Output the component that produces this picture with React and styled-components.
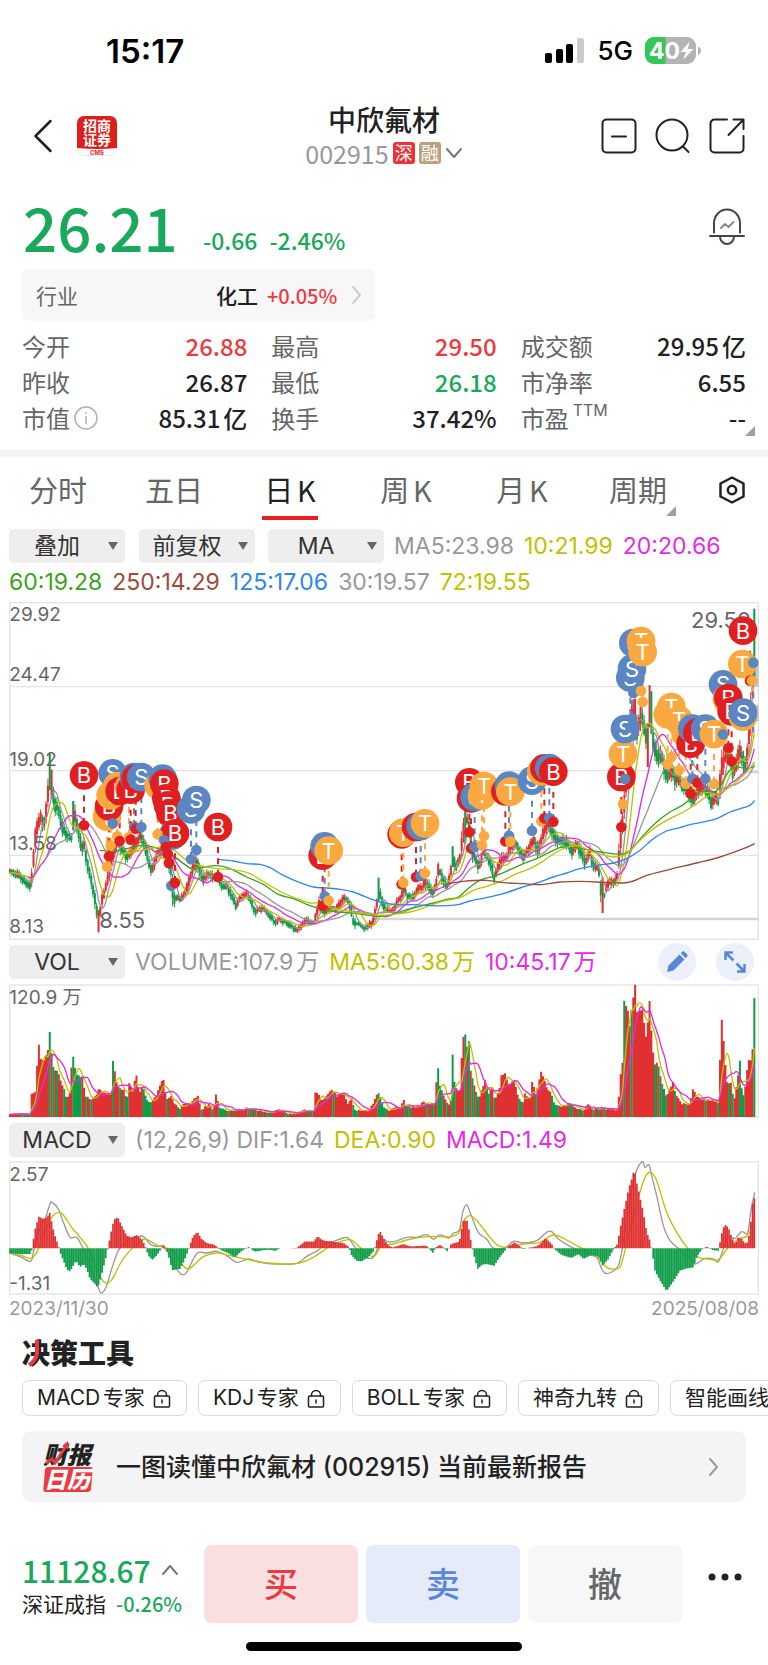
import React from 'react';
import styled, { createGlobalStyle } from 'styled-components';

const C = {
  ink: '#222222',
  label: '#666666',
  mute: '#98989d',
  red: '#ec3a40',
  green: '#1aa85c',
  up: '#e03030',
  down: '#0f9d47',
  olive: '#c0c000',
  magenta: '#e02be8',
  lime: '#3aa21d',
  brown: '#9c4a3c',
  blue: '#2d87ef',
  line: '#e4e4e4',
};

const UI = `"Noto Sans CJK SC", "Noto Sans", sans-serif`;
const NUM = `Inter, "Noto Sans CJK SC", sans-serif`;

const GlobalStyle = createGlobalStyle`
  *, *::before, *::after { box-sizing: border-box; }
  body { margin: 0; background: #fff; color: ${C.ink}; font-family: ${UI}; text-autospace: normal; }
  button, select { font: inherit; color: inherit; border: 0; margin: 0; padding: 0; background: none; cursor: pointer; }
  a { color: inherit; text-decoration: none; }
  h1, h2, p, dl, dd, dt { margin: 0; font-weight: inherit; }
  svg { display: block; flex: none; }
`;

/* ---------- chart data ---------- */

const HALF = 1140;
const FIRST = 30;
const STEP = 5.42;
const COUNT = 413;

const parse = (s, dx = 0) =>
  s.trim().split(/\s+/).map((p) => {
    const [x, y] = p.split(',').map(Number);
    return [x + dx, y];
  });
const series = (early, late) => [...(early ? parse(early) : []), ...(late ? parse(late, HALF) : [])];

const at = (pts, x) => {
  if (x <= pts[0][0]) return pts[0][1];
  for (let i = 1; i < pts.length; i += 1) {
    if (x <= pts[i][0]) {
      const [x0, y0] = pts[i - 1];
      const [x1, y1] = pts[i];
      return x1 === x0 ? y1 : y0 + ((y1 - y0) * (x - x0)) / (x1 - x0);
    }
  }
  return pts[pts.length - 1][1];
};
const noise = (i, k) => {
  const v = Math.sin(i * 12.9898 + k * 78.233) * 43758.5453;
  return v - Math.floor(v);
};
const xs = Array.from({ length: COUNT }, (_, i) => FIRST + i * STEP);
const indexAt = (x) => Math.min(COUNT - 1, Math.round((x - FIRST) / STEP));

const smooth = (pts) => {
  let d = `M${pts[0][0]} ${pts[0][1]}`;
  for (let i = 0; i < pts.length - 1; i += 1) {
    const p0 = pts[Math.max(0, i - 1)];
    const p1 = pts[i];
    const p2 = pts[i + 1];
    const p3 = pts[Math.min(pts.length - 1, i + 2)];
    const c = [
      p1[0] + (p2[0] - p0[0]) / 6, p1[1] + (p2[1] - p0[1]) / 6,
      p2[0] - (p3[0] - p1[0]) / 6, p2[1] - (p3[1] - p1[1]) / 6,
      p2[0], p2[1],
    ].map((n) => n.toFixed(1));
    d += `C${c.join(' ')}`;
  }
  return d;
};
const average = (values, n, start) => {
  const out = [];
  for (let i = start; i < values.length; i += 1) {
    const part = values.slice(Math.max(0, i - n + 1), i + 1);
    out.push([xs[i], part.reduce((a, b) => a + b, 0) / part.length]);
  }
  return out;
};

const price = series(
  `28,845 60,858 92,888 96,850 103,780 108,720 115,700 122,680 130,710 138,660 146,590 151,560 157,590 163,640 172,650
   180,680 188,710 200,735 210,740 217,740 222,660 228,690 236,725 245,780 252,760 258,800 265,840 275,870 285,930
   293,980 298,990 303,940 312,910 320,880 328,850 338,800 346,770 352,750 365,780 380,800 395,780 405,760 420,740
   433,760 445,810 455,840 465,810 475,790 490,780 505,810 514,850 520,930 530,920 540,930 555,910 570,860 580,830
   590,810 600,850 612,870 625,850 640,860 654,865 665,890 680,890 695,915 707,945 720,925 740,910 755,940 765,965
   780,955 795,960 810,980 825,995 840,985 855,995 870,1005 887,1020 900,1010 915,990 940,1000 950,970 955,940
   975,970 990,950 1005,960 1020,940 1035,920 1045,930 1055,970 1062,1000 1075,1000 1090,1015 1105,1010 1120,990
   1130,940 1136,900`,
  `0,910 10,950 25,960 40,955 60,925 70,895 85,920 100,920 115,895 125,895 138,870 150,900 160,910 170,870 176,830
   185,860 200,890 212,850 217,790 228,830 240,800 250,720 258,680 266,700 275,780 285,800 297,830 310,780 318,790
   330,820 343,860 350,840 362,810 380,800 390,770 405,760 418,780 428,800 445,780 462,750 472,780 483,750 492,720
   505,700 515,720 523,740 535,750 550,750 565,765 578,785 590,765 605,790 615,820 630,790 640,830 655,830 662,890
   670,930 678,895 690,870 702,880 712,860 718,790 724,730 730,680 737,590 745,480 755,380 763,360 772,430 780,370
   788,390 795,420 802,470 808,360 813,400 822,470 835,510 845,490 855,550 865,560 875,540 885,570 895,560 908,590
   920,590 930,620 940,630 955,600 970,590 985,610 995,640 1005,620 1015,630 1025,530 1035,500 1045,480 1060,550
   1070,520 1078,480 1085,500 1098,530 1105,450 1112,370 1118,260 1124,210`,
);

const closes = xs.map((x) => at(price, x));
const candles = xs.map((x, i) => {
  const prev = closes[Math.max(0, i - 1)];
  const slope = closes[i] - prev;
  const rising = slope + (noise(i, 1) - 0.55) * 8 < 0;
  const swing = 5 + Math.abs(slope) * 0.5 + noise(i, 2) * 7 + (1000 - closes[i]) * 0.03;
  const mid = closes[i] + (noise(i, 5) - 0.5) * 8;
  return {
    x,
    rising,
    top: mid - swing * 0.55,
    bottom: mid + swing * 0.55,
    high: mid - swing * (0.7 + noise(i, 3) * 0.5),
    low: mid + swing * (0.7 + noise(i, 4) * 0.5),
  };
});
/* sessions whose range is far wider than their neighbours' */
[[151, 490, 600, 0], [157, 538, 625, 1], [222, 632, 720, 0], [298, 960, 1026, 1], [1138, 862, 935, 0], [1357, 768, 830, 0],
  [1396, 650, 760, 0], [1810, 860, 968, 1], [1941, 400, 530, 1], [1947, 285, 410, 1], [1952, 303, 430, 0], [1904, 325, 450, 1],
  [2264, 55, 275, 0]].forEach(([x, top, bottom, up]) => {
  const i = indexAt(x);
  candles[i] = { x: xs[i], rising: !!up, top, bottom, high: top, low: bottom };
});

const strokePath = (list, from, to) =>
  list.map((c) => `M${c.x.toFixed(1)} ${from(c).toFixed(1)}V${to(c).toFixed(1)}`).join('');

const ma60 = series(
  `299,780 340,783 380,775 430,765 470,773 500,785 540,812 575,835 600,832 650,826 690,835 740,860 790,882 835,912
   880,925 920,942 960,955 1010,965 1060,968 1110,975 1150,978`,
  `40,970 80,958 120,948 160,938 200,927 235,920 270,890 300,870 350,855 390,838 430,820 470,805 500,790 540,772
   580,770 620,778 660,785 720,792 750,780 790,735 830,695 870,665 910,643 950,610 980,600 1000,606 1020,590
   1045,545 1070,530 1100,535 1124,528`,
);
const ma72 = series(
  `365,790 400,785 450,775 500,770 530,785 560,810 600,825 650,835 700,838 750,850 800,880 850,908 890,925 930,938
   960,938 1000,955 1060,965 1110,972`,
  `0,975 60,970 110,960 150,945 190,932 240,922 280,900 320,888 370,870 410,850 450,835 490,812 530,785 570,768
   600,768 640,785 700,800 740,790 780,750 820,715 860,690 910,665 950,640 980,618 1010,612 1050,590 1090,555 1124,515`,
);
const ma125 = series(
  `654,807 700,812 740,820 780,822 810,832 850,855 900,877 940,890 980,893 1020,897 1060,905 1110,925`,
  `0,935 50,943 100,943 150,946 200,946 235,943 270,932 320,922 370,910 420,893 470,878 520,860 560,848 600,835
   650,825 700,818 740,805 780,780 820,745 860,722 900,712 930,703 960,697 1010,685 1050,665 1090,652 1110,645 1124,630`,
);
const ma250 = series(
  '',
  `205,880 250,873 320,870 370,877 430,880 480,883 540,875 600,873 650,875 730,878 760,872 800,855 870,837 950,818
   1020,800 1090,775 1124,760`,
);

const volume = series(
  `27,534 92,533 96,470 106,465 112,385 117,325 123,370 133,368 145,338 150,288 156,370 163,405 173,400 182,430 190,458
   200,485 210,470 215,395 221,362 227,405 235,418 245,420 250,455 258,480 278,488 288,475 297,458 315,468 333,475
   341,375 347,428 355,450 370,460 380,490 390,440 398,465 407,418 418,470 428,448 440,490 455,498 470,475 488,428
   500,485 510,480 525,500 540,515 555,500 575,498 593,475 605,520 625,502 640,520 648,475 658,515 680,520 700,522
   740,515 780,524 810,528 833,518 860,530 890,530 910,520 940,528 947,465 953,468 965,495 985,470 997,458 1010,478
   1030,470 1045,505 1052,482 1065,520 1085,522 1105,525 1115,510 1128,480 1138,468`,
  `5,500 15,518 30,522 50,508 60,518 70,492 80,512 100,510 120,508 130,492 145,503 165,500 172,395 179,445 188,470
   205,505 213,490 217,352 222,435 230,460 240,460 248,305 255,292 261,330 266,315 272,405 282,445 297,490 310,445
   316,428 325,475 335,455 345,490 360,455 365,418 375,410 385,445 403,432 415,480 428,500 435,470 450,490 458,437
   468,475 478,430 484,405 492,432 500,450 515,475 525,505 545,510 570,498 590,515 610,520 625,502 640,520 660,515
   690,518 712,520 718,480 724,412 730,378 735,195 741,222 750,275 757,222 763,145 769,230 778,225 785,218 790,260
   800,310 807,195 813,285 820,350 825,385 833,375 842,420 850,455 860,480 870,460 878,437 888,475 905,500 930,503
   940,455 950,480 965,490 985,490 1000,490 1015,500 1018,435 1024,250 1032,322 1040,435 1050,440 1062,490 1072,435
   1079,370 1085,455 1092,480 1105,370 1112,370 1118,338 1124,188`,
);
/* the highest turnover inside each session's slot */
const slotTop = (x) => Math.min(...volume.filter(([vx]) => Math.abs(vx - x) <= STEP / 2).map((v) => v[1]), at(volume, x));
const volumes = xs.map((x, i) => Math.min(536, slotTop(x) + noise(i, 6) * 6));
const greenVolume = [150, 221, 227, 235, 341, 1138, 1312, 1319, 1357, 1362, 1395, 1406, 1875, 1897, 2219, 2264].map(indexAt);
const redVolume = [117, 123, 145, 215, 347, 488, 593, 648, 947, 1388, 1870, 1881, 1890, 1903, 1909, 1918, 1925, 1930, 1940, 1947, 2164, 2172, 2245, 2258]
  .map(indexAt);
const volumeBars = xs.map((x, i) => {
  const growing = i > 0 && volumes[i] < volumes[i - 1];
  const rising = redVolume.includes(i) || (!greenVolume.includes(i) && (growing || candles[i].rising || noise(i, 8) > 0.7));
  return { x, y: volumes[i], rising };
});

const histogram = series(
  `27,952 60,955 93,955 97,935 103,890 108,870 117,842 130,850 140,845 150,830 157,870 165,900 175,930 182,955 190,975
   200,1000 210,1008 220,990 228,975 240,995 250,985 260,1000 270,1030 285,1045 293,1057 300,1035 308,1005 318,965
   325,930 333,890 340,860 347,845 355,848 365,870 380,900 395,905 410,898 425,910 435,930 445,960 457,973 470,960
   480,945 490,928 500,942 508,970 516,1003 540,1000 553,975 565,945 575,910 585,895 593,890 605,910 620,922 645,928
   660,942 680,950 705,965 720,950 735,940 745,934 765,948 800,942 827,945 840,938 890,937 905,925 915,917 940,918
   953,902 970,915 1000,918 1030,922 1045,932 1055,960 1070,975 1085,977 1105,965 1122,945 1130,915 1138,887`,
  `0,887 12,910 25,930 40,935 70,925 90,932 140,930 150,942 158,952 168,935 180,928 190,935 203,948 213,925 238,918
   245,880 250,855 262,855 270,900 275,930 282,960 293,1000 305,988 318,985 343,990 355,970 375,945 385,932 403,920
   418,930 430,941 445,936 465,934 480,925 497,907 515,925 525,942 545,958 575,967 595,955 610,970 635,958 655,962
   668,990 685,970 700,942 712,925 722,870 735,810 747,755 755,730 763,700 770,740 780,785 790,830 800,890 810,915
   815,940 825,1005 840,1035 860,1066 875,1045 900,1005 920,998 940,995 950,965 965,942 980,933 1000,944 1015,945
   1020,920 1028,880 1035,867 1045,875 1055,905 1065,925 1075,905 1085,910 1098,925 1105,915 1112,860 1118,800 1124,785`,
);
const histBars = xs.map((x) => ({ x, y: at(histogram, x) }));
const dif = series(
  `28,952 60,963 92,977 100,950 115,890 135,850 150,805 156,800 175,820 190,860 210,905 230,905 250,940 270,990
   293,1050 303,1072 318,1055 335,1000 355,945 380,915 410,905 430,902 450,925 470,932 490,932 510,960 530,1000
   547,1017 560,1010 580,970 595,950 620,952 650,947 680,960 710,980 745,970 780,980 827,985 890,983 920,962 953,945
   975,925 1000,917 1030,907 1045,908 1070,940 1100,966 1120,965 1136,930`,
  `5,910 25,918 45,917 80,905 110,905 140,897 160,910 180,897 205,907 220,893 238,883 248,830 260,807 272,835 295,890
   320,910 340,937 375,937 400,917 430,922 470,915 500,890 515,888 535,910 570,932 620,955 650,965 665,1000 680,1014
   710,998 722,965 735,890 750,790 768,710 787,678 795,695 807,688 815,720 830,780 850,870 870,915 900,942 930,965
   945,985 975,968 1000,970 1015,978 1030,940 1045,905 1065,908 1085,888 1103,892 1112,830 1124,770`,
);
const dea = series(
  `28,948 60,958 92,968 110,950 130,900 155,845 175,830 190,838 215,875 240,905 265,938 285,990 303,1028 322,1043
   340,1025 360,985 385,950 415,922 435,910 465,925 490,935 520,945 545,985 565,1000 585,985 610,963 650,952 690,960
   745,972 790,980 850,985 895,983 940,965 980,938 1010,922 1050,912 1080,935 1105,958 1125,960`,
  `5,930 40,925 80,913 140,903 180,903 210,903 235,893 255,850 272,840 295,860 330,905 355,930 385,935 430,925 480,920
   520,898 560,913 600,935 650,962 680,995 705,1000 722,990 740,925 755,860 780,770 795,725 812,710 830,735 860,830
   890,890 925,940 955,965 985,970 1015,972 1045,935 1075,910 1105,898 1124,845`,
);

/* trade marks: kind, badge x, badge y, dot x, dot y */
const near = (list, dx = 0) => list.map(([k, x, y, x2 = x, y2 = y + 150]) => [k, x + dx, y, x2 + dx, y2]);
const marks = [
  ...near([
    ['B', 252, 555], ['S', 338, 549], ['T', 321, 679], ['B', 327, 648], ['T', 332, 615], ['T', 352, 588], ['B', 359, 602],
    ['T', 387, 590], ['B', 392, 598], ['S', 402, 560], ['B', 407, 565], ['S', 424, 560], ['T', 476, 585, 473, 732],
    ['S', 488, 565, 492, 750], ['B', 493, 580, 497, 770], ['B', 499, 624, 503, 790], ['B', 504, 645, 507, 818],
    ['B', 511, 668, 507, 818], ['S', 518, 735, 514, 886], ['B', 525, 729, 525, 877], ['S', 573, 657], ['S', 589, 629],
    ['B', 654, 710], ['B', 968, 796], ['S', 974, 768], ['T', 986, 781],
  ]),
  ...near([
    ['B', 65, 732], ['T', 70, 727], ['B', 108, 710], ['S', 122, 707], ['T', 135, 699], ['B', 268, 576], ['B', 273, 624],
    ['S', 284, 620], ['T', 306, 615], ['T', 312, 587], ['B', 376, 603], ['S', 387, 586], ['T', 391, 604], ['S', 456, 571],
    ['T', 484, 543], ['B', 493, 534], ['S', 508, 533], ['B', 520, 544], ['B', 724, 560], ['T', 729, 491], ['S', 735, 416],
    ['S', 760, 158], ['S', 751, 262], ['S', 756, 235], ['T', 783, 152], ['T', 788, 185], ['T', 863, 372], ['T', 874, 350],
    ['T', 897, 390], ['T', 917, 430], ['B', 932, 460], ['S', 937, 415], ['B', 952, 427], ['S', 976, 415], ['T', 1002, 431],
    ['S', 1029, 282], ['T', 1041, 326, 1045, 475], ['B', 1045, 323], ['B', 1055, 363], ['T', 1087, 221, 1112, 271],
    ['B', 1089, 121, 1110, 271], ['T', 1089, 379, 1116, 271], ['S', 1089, 367, 1120, 217],
  ], HALF),
];
const MARK = { B: '#e02020', S: '#5b86c2', T: '#f9a940' };

/* ---------- layout ---------- */

const Page = styled.main`
  width: 100%;
  overflow: hidden;
  background: #fff;
`;
const StatusBar = styled.div`
  display: flex;
  align-items: center;
  justify-content: space-between;
  height: 102px;
  padding: 0 66px 0 106px;
  color: #000;
  font-family: ${NUM};
`;
const Clock = styled.time`
  font-size: 33px;
  line-height: 36px;
  font-weight: 600;
`;
const StatusIcons = styled.div`
  display: flex;
  align-items: center;
  gap: 12px;
  font-size: 26px;
  line-height: 32px;
  font-weight: 500;
`;
const Header = styled.header`
  display: grid;
  grid-template-columns: 1fr auto 1fr;
  align-items: center;
  height: 64px;
  padding: 0 23px;
`;
const Side = styled.div`
  display: flex;
  align-items: center;
  gap: ${(p) => p.$gap}px;
  padding-left: 7px;
  justify-content: ${(p) => (p.$end ? 'flex-end' : 'flex-start')};
`;
const IconButton = styled.button`
  display: flex;
  align-items: center;
  justify-content: center;
`;
const TitleBlock = styled.div`
  display: flex;
  flex-direction: column;
  align-items: center;
`;
const Title = styled.h1`
  font-size: 28px;
  line-height: 34px;
  font-weight: 500;
`;
const CodeRow = styled.button`
  display: flex;
  align-items: center;
  gap: 4px;
  font-size: 25px;
  line-height: 34px;
  color: ${C.mute};
`;
const Tag = styled.span`
  width: 22px;
  height: 22px;
  border-radius: 3px;
  background: ${(p) => p.$bg};
  color: #fff;
  font-size: 18px;
  line-height: 21px;
  text-align: center;
`;
const PriceRow = styled.section`
  display: flex;
  align-items: flex-end;
  height: 84px;
  padding: 0 23px;
  margin-top: 8px;
  color: ${C.green};
  font-weight: 500;
`;
const Price = styled.p`
  width: 180px;
  font-size: 60px;
  line-height: 64px;
`;
const Change = styled.p`
  display: flex;
  flex: 1;
  gap: 12px;
  font-size: 23px;
  line-height: 36px;
`;
const BellButton = styled(IconButton)`
  align-self: center;
  padding-top: 22px;
`;
const Industry = styled.a`
  display: flex;
  align-items: center;
  width: 46%;
  height: 52px;
  margin: 11px 22px 0;
  padding: 0 12px 0 14px;
  border-radius: 7px;
  background: #f7f7f7;
  font-size: 21px;
  color: ${C.label};
`;
const IndustryName = styled.span`
  margin: 0 9px 0 auto;
  color: ${C.ink};
  font-weight: 500;
`;
const IndustryMove = styled.span`
  margin-right: 14px;
  color: ${C.red};
  font-size: 20px;
  font-weight: 500;
`;
const Stats = styled.dl`
  position: relative;
  display: grid;
  grid-template-columns: repeat(3, 1fr);
  column-gap: 24px;
  padding: 7px 22px 14px;
`;
const Stat = styled.div`
  display: flex;
  align-items: center;
  justify-content: space-between;
  height: 36px;
  font-size: 24px;
  line-height: 36px;
`;
const StatLabel = styled.dt`
  display: flex;
  align-items: center;
  gap: 4px;
  color: ${C.label};
`;
const StatValue = styled.dd`
  color: ${(p) => p.$color || C.ink};
  font-size: 24px;
  font-weight: 500;
`;
const Sup = styled.sup`
  align-self: flex-start;
  font: 16px/20px ${NUM};
`;
const Corner = styled.i`
  position: absolute;
  right: ${(p) => p.$right}px;
  bottom: ${(p) => p.$bottom}px;
  width: 0;
  height: 0;
  border-left: 10px solid transparent;
  border-bottom: 10px solid #a0a0a0;
`;
const Band = styled.div`
  height: 7px;
  background: #f4f4f4;
`;
const Tabs = styled.nav`
  display: flex;
  height: 67px;
`;
const Tab = styled.button`
  position: relative;
  flex: 1;
  display: flex;
  justify-content: center;
  color: ${(p) => (p.$active ? C.ink : C.label)};
  font-size: 29px;
  line-height: 64px;

  span {
    height: 63px;
    padding: 0 2px;
    border-bottom: 4px solid ${(p) => (p.$active ? '#ea2020' : 'transparent')};
  }
`;
const GearButton = styled(IconButton)`
  width: 72px;
  padding-bottom: 2px;
`;
const Charts = styled.section`
  padding: 0 9px;
  font-family: ${NUM};
`;
const Legend = styled.div`
  display: flex;
  flex-wrap: wrap;
  align-items: center;
  align-content: ${(p) => (p.$pad ? 'flex-start' : 'center')};
  column-gap: 10px;
  min-height: ${(p) => p.$h}px;
  padding-top: ${(p) => p.$pad || 0}px;
  font-size: 23px;
  line-height: 36px;
  white-space: nowrap;
`;
const Reading = styled.span`
  color: ${(p) => p.$color};
`;
const Picker = styled.label`
  position: relative;
  display: flex;
  width: 116px;
  margin-right: ${(p) => p.$after || 0}px;

  svg {
    position: absolute;
    right: 7px;
    top: 13px;
    pointer-events: none;
  }
`;
const Select = styled.select`
  appearance: none;
  width: 100%;
  height: 34px;
  padding-right: 20px;
  border-radius: 5px;
  background: #eeeeee;
  color: #333333;
  font-size: 23px;
  line-height: 34px;
  text-align-last: center;
`;
const Plot = styled.svg`
  width: 100%;
  height: auto;
  overflow: hidden;

  text { font-family: ${NUM}; font-size: 57px; fill: #666666; }
  path { fill: none; }
`;
const ChartTools = styled.div`
  display: flex;
  gap: 20px;
  margin-left: auto;
  padding-right: 5px;
`;
const RoundButton = styled(IconButton)`
  width: 38px;
  height: 38px;
  border-radius: 50%;
  background: #ebf0fb;
`;
const Dates = styled.div`
  display: flex;
  justify-content: space-between;
  font-size: 19px;
  line-height: 28px;
  color: #999999;
`;
const Tools = styled.section`
  padding: 12px 0 0 22px;
`;
const ToolsTitle = styled.h2`
  position: relative;
  font-size: 28px;
  line-height: 34px;
  font-weight: 900;

  svg { position: absolute; left: 0; top: 3px; }
`;
const Chips = styled.div`
  display: flex;
  gap: 11px;
  padding-top: 11px;
  overflow: hidden;
`;
const Chip = styled.button`
  display: flex;
  flex: none;
  align-items: center;
  gap: 8px;
  height: 36px;
  padding: 0 15px 0 14px;
  border: 1px solid #dadada;
  border-radius: 7px;
  font: 21px/34px ${NUM};
  white-space: nowrap;
`;
const Banner = styled.a`
  display: flex;
  align-items: center;
  gap: 22px;
  height: 71px;
  margin: 15px 22px 0;
  padding: 0 26px 0 20px;
  border-radius: 9px;
  background: #f4f4f4;
  font: 500 25px/36px ${NUM};

  & > :last-child { margin-left: auto; }
`;
const TradeBar = styled.footer`
  display: flex;
  align-items: center;
  gap: 8px;
  margin-top: 43px;
  padding: 0 22px;
`;
const IndexQuote = styled.button`
  flex: none;
  width: 174px;
  text-align: left;
  font-size: 21px;
  line-height: 28px;
`;
const IndexValue = styled.span`
  display: flex;
  align-items: center;
  gap: 10px;
  height: 38px;
  color: ${C.green};
  font-size: 30px;
  font-weight: 500;
`;
const IndexMove = styled.span`
  margin-left: 10px;
  color: ${C.green};
  font-size: 20px;
  font-weight: 500;
`;
const TradeButton = styled.button`
  flex: 1;
  height: 78px;
  padding-bottom: 3px;
  border-radius: 7px;
  background: ${(p) => p.$bg};
  color: ${(p) => p.$color};
  font-size: 34px;
  font-weight: 500;
`;
const MoreButton = styled(IconButton)`
  width: 56px;
  height: 78px;
  justify-content: flex-end;
  padding: 0 4px 14px 0;
`;
const HomeIndicator = styled.div`
  width: 36%;
  height: 9px;
  margin: 19px auto 14px;
  border-radius: 5px;
  background: #000;
`;

/* ---------- drawings ---------- */

const Signal = () => (
  <svg width="40" height="26" viewBox="0 0 40 26">
    <rect x="0" y="15" width="7" height="10" rx="2" />
    <rect x="11" y="11" width="7" height="14" rx="2" />
    <rect x="21" y="6" width="7" height="19" rx="2" />
    <rect x="32" y="0" width="7" height="25" rx="2" fill="#cccccc" />
  </svg>
);
const Battery = () => (
  <svg width="57" height="28" viewBox="0 0 57 28">
    <path d="M9 0H42a9 9 0 0 1 9 9V18a9 9 0 0 1-9 9H9a9 9 0 0 1-9-9V9a9 9 0 0 1 9-9Z" fill="#b3b3b3" />
    <path d="M9 0H20.500V27H9a9 9 0 0 1-9-9V9a9 9 0 0 1 9-9Z" fill="#34c759" />
    <path d="M53 9.500c4 1.500 4 7 0 8.500Z" fill="#b3b3b3" />
    <text x="4" y="22" fontSize="23" fontWeight="700" fill="#fff" fontFamily="Inter">40</text>
    <path d="M45 4.500L35.500 15h5.500L38 23l10.500-11h-6Z" fill="#fff" />
  </svg>
);
const Back = () => (
  <svg width="24" height="34" viewBox="0 0 24 34" fill="none" stroke="#222" strokeWidth="2.500">
    <path d="M20.500 2L5.500 17l15 15" strokeLinecap="round" strokeLinejoin="round" />
  </svg>
);
const BrokerLogo = () => (
  <svg width="40" height="40" viewBox="0 0 40 40" role="img" aria-label="招商证券">
    <rect x="0.500" y="0.500" width="39" height="39" rx="7" fill="#fff" stroke="#e8e8e8" />
    <path d="M7 0H33a7 7 0 0 1 7 7V32Q20 34 0 32V7a7 7 0 0 1 7-7Z" fill="#dc1f1c" />
    <g fill="#fff" fontFamily="Noto Sans CJK SC" fontWeight="700" fontSize="14" textAnchor="middle">
      <text x="20" y="15">招商</text>
      <text x="20" y="29">证券</text>
    </g>
    <text x="20" y="39" fontSize="6" fontWeight="700" fill="#dc1f1c" textAnchor="middle" fontFamily="Inter">CMS</text>
  </svg>
);
const Line = ({ w, h, width = 2, color = '#222', children }) => (
  <svg width={w} height={h} viewBox={`0 0 ${w} ${h}`} fill="none" stroke={color} strokeWidth={width} strokeLinecap="round" strokeLinejoin="round">
    {children}
  </svg>
);
const Remove = () => (
  <Line w={36} h={36}><rect x="1.500" y="1.500" width="33" height="33" rx="4" /><path d="M11 18.500H25" /></Line>
);
const Search = () => (
  <Line w={36} h={36}><circle cx="17" cy="17" r="15.500" /><path d="M28 28.500L33.500 34" /></Line>
);
const Share = () => (
  <Line w={36} h={36}>
    <path d="M18 1.500H5.500a4 4 0 0 0-4 4V30.500a4 4 0 0 0 4 4H30.500a4 4 0 0 0 4-4V18" />
    <path d="M24.500 1.500H34.500V11M34 2L19.500 17" />
  </Line>
);
const Bell = () => (
  <Line w={36} h={38} color="#444">
    <path d="M5 24.500V15a13 13.500 0 0 1 26 0v9.500M1 28H35M11 28.500a7 7.500 0 0 0 14 0" />
    <path d="M12 20l4-4 3.500 3 5-5" stroke="#888" />
  </Line>
);
const Down = () => <Line w={18} h={12} color="#777"><path d="M2 2l7 8 7-8" /></Line>;
const Up = () => <Line w={18} h={12} color="#777"><path d="M2 10l7-8 7 8" /></Line>;
const Next = ({ color }) => <Line w={12} h={20} color={color}><path d="M2 2l7 8-7 8" /></Line>;
const Info = () => (
  <Line w={24} h={24} width={1.500} color="#b0b0b0"><circle cx="12" cy="12" r="11" /><path d="M12 10.500v7M12 6.500v.5" /></Line>
);
const Gear = () => (
  <Line w={28} h={28} width={2.500}><path d="M14 1.500L25.500 7.500V20.500L14 26.500 2.500 20.500V7.500Z" /><circle cx="14" cy="14" r="4.200" /></Line>
);
const Lock = () => (
  <Line w={18} h={19} width={1.500}><rect x="1.500" y="7" width="15" height="11" rx="1" /><path d="M4.500 7V6a4.500 4.500 0 0 1 9 0v1M9 11v3" /></Line>
);
const Caret = () => <svg width="10" height="8" viewBox="0 0 10 8"><path d="M0 0H10L5 8Z" fill="#666" /></svg>;
const Pencil = () => (
  <svg width="22" height="22" viewBox="0 0 22 22" fill="#5b86d8">
    <path d="M1 21L2.500 14.500 13.500 3.500 18.500 8.500 7.500 19.500Z" /><path d="M14.800 2.300L16.500 .6q1.200-.8 2.300.3L21 3.200q1 1.100.2 2.200L19.700 7.200Z" />
  </svg>
);
const Expand = () => (
  <svg width="22" height="22" viewBox="0 0 22 22" fill="none" stroke="#5b86d8" strokeWidth="2.500">
    <path d="M9.500 9.500L2 2M1.500 9V1.500H9M12.500 12.500L20 20M20.500 13V20.500H13" />
  </svg>
);
const ReportLogo = () => (
  <svg width="52" height="52" viewBox="0 0 52 52" overflow="visible" role="img" aria-label="财报日历">
    <g fontFamily="Noto Sans CJK SC" fontWeight="900" fontStyle="italic">
      <text x="1" y="23" fontSize="24" fill="#222">财报</text>
      <path d="M6 26H48q3 0 2.600 3L49 48q-.4 3-3.500 3H4q-3 0-2.600-3L3 29q.3-3 3-3Z" fill="#ec3a40" />
      <text x="2" y="47" fontSize="23" fill="#fff">日历</text>
    </g>
    <path d="M4 22l6-4 3 4L24 5" fill="none" stroke="#ec3a40" strokeWidth="3" /><path d="M20 5L26 0l.5 8Z" fill="#ec3a40" />
  </svg>
);

/* ---------- charts ---------- */

const Curve = ({ pts, color }) => <path d={smooth(pts)} stroke={color} strokeWidth="4" />;

const PriceChart = () => (
  <Plot viewBox="27 35 2250 1014" role="img" aria-label="日K线图">
    <g stroke={C.line} strokeWidth="4" fill="none">
      <rect x="29" y="37" width="2246" height="1010" />
      <path d="M27 289H2277M27 541H2277M27 795H2277" />
    </g>
    <path d="M1120 986H2277M2240 545H2277" stroke="#d4d4d4" strokeWidth="7" />
    <path d="M2270 225V290M2270 343V392" stroke="#c8c8c8" strokeWidth="13" />
    {[true, false].map((up) => {
      const list = candles.filter((c) => c.rising === up);
      return (
        <g key={String(up)} stroke={up ? C.up : C.down}>
          <path d={strokePath(list, (c) => c.high, (c) => c.low)} strokeWidth="3" />
          <path d={strokePath(list, (c) => c.top, (c) => c.bottom)} strokeWidth="6" />
        </g>
      );
    })}
    <Curve pts={average(closes, 5, 0)} color={C.mute} />
    <Curve pts={average(closes, 10, 0)} color={C.olive} />
    <Curve pts={average(closes, 20, 10)} color={C.magenta} />
    <Curve pts={average(closes, 30, 20)} color={C.mute} />
    <Curve pts={ma60} color={C.lime} />
    <Curve pts={ma72} color={C.olive} />
    <Curve pts={ma125} color={C.blue} />
    <Curve pts={ma250} color={C.brown} />
    <g>
      <text x="28" y="92">29.92</text>
      <text x="28" y="273">24.47</text>
      <text x="28" y="526">19.02</text>
      <text x="28" y="778">13.58</text>
      <text x="28" y="1029">8.13</text>
    </g>
    <g style={{ fontSize: 66 }}>
      <text x="298" y="1014" style={{ fontSize: 'inherit' }}>8.55</text>
      <text x="2073" y="114" style={{ fontSize: 'inherit' }}>29.50</text>
    </g>
    {marks.map(([k, , y, x2, y2], i) => (
      <path key={i} d={`M${x2} ${y + 60}V${y2}`} stroke={MARK[k]} strokeWidth="6" strokeDasharray="18 16" />
    ))}
    {marks.map(([k, x, y], i) => (
      <g key={i}>
        <circle cx={x} cy={y} r="43" fill={MARK[k]} />
        <text x={x} y={y + 24} textAnchor="middle" style={{ fill: '#fff', fontSize: 66 }}>{k}</text>
      </g>
    ))}
    {marks.map(([k, , , x2, y2], i) => <circle key={i} cx={x2} cy={y2} r="16" fill={MARK[k]} />)}
  </Plot>
);

const VolumeChart = () => (
  <Plot viewBox="27 145 2250 402" role="img" aria-label="成交量">
    <rect x="29" y="148" width="2246" height="396" fill="none" stroke={C.line} strokeWidth="4" />
    {[true, false].map((up) => (
      <path
        key={String(up)}
        d={strokePath(volumeBars.filter((b) => b.rising === up), (b) => b.y, () => 544)}
        stroke={up ? C.up : C.down}
        strokeWidth="6"
      />
    ))}
    <Curve pts={average(volumes, 5, 0)} color={C.olive} />
    <Curve pts={average(volumes, 10, 0)} color={C.magenta} />
    <text x="28" y="204">120.9 万</text>
  </Plot>
);

const MacdChart = () => (
  <Plot viewBox="27 676 2250 402" role="img" aria-label="MACD">
    <rect x="29" y="679" width="2246" height="396" fill="none" stroke={C.line} strokeWidth="4" />
    <Curve pts={dif} color={C.mute} />
    <Curve pts={dea} color={C.olive} />
    <path d={strokePath(histBars.filter((b) => b.y < 938), (b) => b.y, () => 938)} stroke={C.up} strokeWidth="5" />
    <path d={strokePath(histBars.filter((b) => b.y >= 938), (b) => b.y, () => 938)} stroke={C.down} strokeWidth="5" />
    <text x="28" y="735">2.57</text>
    <text x="28" y="1062">-1.31</text>
  </Plot>
);

/* ---------- page ---------- */

const stats = [
  ['今开', '26.88', C.red], ['最高', '29.50', C.red], ['成交额', '29.95亿'],
  ['昨收', '26.87'], ['最低', '26.18', C.green], ['市净率', '6.55'],
  ['市值', '85.31亿'], ['换手', '37.42%'], ['市盈', '--'],
];
const tabs = ['分时', '五日', '日K', '周K', '月K', '周期'];

const Dropdown = ({ label, value, after }) => (
  <Picker $after={after}>
    <Select aria-label={label} defaultValue={value}>
      <option>{value}</option>
    </Select>
    <Caret />
  </Picker>
);

export default function App() {
  return (
    <Page>
      <GlobalStyle />
      <StatusBar>
        <Clock>15:17</Clock>
        <StatusIcons><Signal />5G<Battery /></StatusIcons>
      </StatusBar>

      <Header>
        <Side $gap={23}>
          <IconButton aria-label="返回"><Back /></IconButton>
          <BrokerLogo />
        </Side>
        <TitleBlock>
          <Title>中欣氟材</Title>
          <CodeRow>002915<Tag $bg="#e9333b">深</Tag><Tag $bg="#bda17c">融</Tag><Down /></CodeRow>
        </TitleBlock>
        <Side $gap={18} $end>
          <IconButton aria-label="移除自选"><Remove /></IconButton>
          <IconButton aria-label="搜索"><Search /></IconButton>
          <IconButton aria-label="分享"><Share /></IconButton>
        </Side>
      </Header>

      <PriceRow>
        <Price>26.21</Price>
        <Change><span>-0.66</span><span>-2.46%</span></Change>
        <BellButton aria-label="预警"><Bell /></BellButton>
      </PriceRow>

      <Industry href="#industry">
        行业
        <IndustryName>化工</IndustryName>
        <IndustryMove>+0.05%</IndustryMove>
        <Next color="#cccccc" />
      </Industry>

      <Stats>
        {stats.map(([label, value, color]) => (
          <Stat key={label}>
            <StatLabel>
              {label}
              {label === '市值' && <Info />}
              {label === '市盈' && <Sup>TTM</Sup>}
            </StatLabel>
            <StatValue $color={color}>{value}</StatValue>
          </Stat>
        ))}
        <Corner $right={13} $bottom={14} />
      </Stats>
      <Band />

      <Tabs>
        {tabs.map((t) => (
          <Tab key={t} $active={t === '日K'}>
            <span>{t}</span>
            {t === '周期' && <Corner $right={20} $bottom={8} />}
          </Tab>
        ))}
        <GearButton aria-label="设置"><Gear /></GearButton>
      </Tabs>

      <Charts>
        <Legend $h={78} $pad={4}>
          <Dropdown label="叠加" value="叠加" after={4} />
          <Dropdown label="复权" value="前复权" after={3} />
          <Dropdown label="主图指标" value="MA" />
          <Reading $color={C.mute}>MA5:23.98</Reading>
          <Reading $color={C.olive}>10:21.99</Reading>
          <Reading $color={C.magenta}>20:20.66</Reading>
          <Reading $color={C.lime}>60:19.28</Reading>
          <Reading $color={C.brown}>250:14.29</Reading>
          <Reading $color={C.blue}>125:17.06</Reading>
          <Reading $color={C.mute}>30:19.57</Reading>
          <Reading $color={C.olive}>72:19.55</Reading>
        </Legend>
        <PriceChart />

        <Legend $h={44}>
          <Dropdown label="成交量指标" value="VOL" />
          <Reading $color={C.mute}>VOLUME:107.9万</Reading>
          <Reading $color={C.olive}>MA5:60.38万</Reading>
          <Reading $color={C.magenta}>10:45.17万</Reading>
          <ChartTools>
            <RoundButton aria-label="画线"><Pencil /></RoundButton>
            <RoundButton aria-label="全屏"><Expand /></RoundButton>
          </ChartTools>
        </Legend>
        <VolumeChart />

        <Legend $h={43}>
          <Dropdown label="副图指标" value="MACD" />
          <Reading $color={C.mute}>(12,26,9) DIF:1.64</Reading>
          <Reading $color={C.olive}>DEA:0.90</Reading>
          <Reading $color={C.magenta}>MACD:1.49</Reading>
        </Legend>
        <MacdChart />
        <Dates><time>2023/11/30</time><time>2025/08/08</time></Dates>
      </Charts>

      <Tools>
        <ToolsTitle>
          决策工具
          <svg width="28" height="30" viewBox="0 0 28 30">
            <path d="M15 2V15Q14 23 7 27" fill="none" stroke="#ec3a40" strokeWidth="4" />
          </svg>
        </ToolsTitle>
        <Chips>
          {['MACD专家', 'KDJ专家', 'BOLL专家', '神奇九转', '智能画线'].map((c) => (
            <Chip key={c}>{c}<Lock /></Chip>
          ))}
        </Chips>
      </Tools>

      <Banner href="#report">
        <ReportLogo />
        <span>一图读懂中欣氟材 (002915) 当前最新报告</span>
        <Next color="#999999" />
      </Banner>

      <TradeBar>
        <IndexQuote>
          <IndexValue>11128.67<Up /></IndexValue>
          深证成指<IndexMove>-0.26%</IndexMove>
        </IndexQuote>
        <TradeButton $bg="#fbe0e1" $color={C.red}>买</TradeButton>
        <TradeButton $bg="#e5ebf8" $color="#5b86d8">卖</TradeButton>
        <TradeButton $bg="#f7f7f7" $color={C.label}>撤</TradeButton>
        <MoreButton aria-label="更多">
          <svg width="34" height="8" viewBox="0 0 34 8" fill="#222"><circle cx="4" cy="4" r="3.500" /><circle cx="17" cy="4" r="3.500" /><circle cx="30" cy="4" r="3.500" /></svg>
        </MoreButton>
      </TradeBar>
      <HomeIndicator />
    </Page>
  );
}
